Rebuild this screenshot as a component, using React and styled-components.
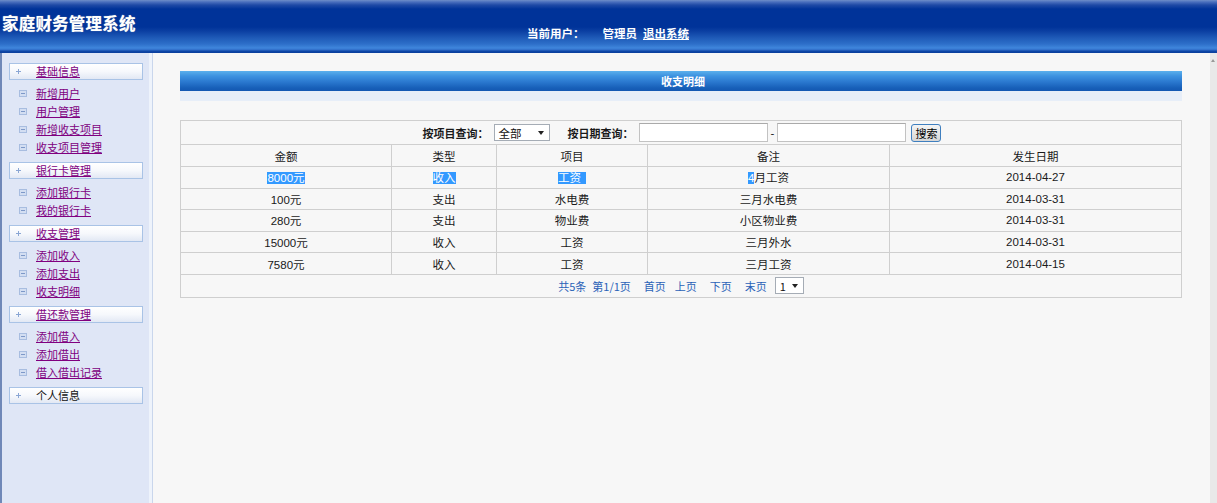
import React from "react";
import styled, { createGlobalStyle } from "styled-components";

const GlobalStyle = createGlobalStyle`
  html, body { margin: 0; padding: 0; background: #f7f7f7; }
  body { font-family: "Liberation Sans", "Noto Sans CJK SC", sans-serif; }
  * { box-sizing: border-box; }
`;

const Page = styled.div`
  width: 1217px;
  height: 503px;
  display: flex;
  flex-direction: column;
  overflow: hidden;
`;

const Header = styled.header`
  height: 53px;
  flex: none;
  position: relative;
  display: flex;
  align-items: flex-start;
  background: linear-gradient(
    to bottom,
    #6f8ec8 0px,
    #4a6fbd 2px,
    #1f4aa6 5px,
    #003399 9px,
    #003399 27px,
    #0b3fa2 31px,
    #1f5bb8 38px,
    #2d6fc9 44px,
    #3f86dc 48px,
    #2f6cc8 50px,
    #0f48a8 51px,
    #0a3e9c 53px
  );
`;

const Brand = styled.h1`
  margin: 0;
  padding: 11px 0 0 2px;
  font-size: 16.5px;
  font-weight: bold;
  color: #fff;
  letter-spacing: 0.2px;
  font-family: "Noto Sans CJK SC", sans-serif;
  text-shadow: 0 0 1px #9ab;
`;

const UserInfo = styled.div`
  position: absolute;
  left: 527px;
  top: 25px;
  display: flex;
  gap: 6px;
  font-size: 11.5px;
  color: #fff;
  font-weight: bold;
  font-family: "Noto Sans CJK SC", sans-serif;
`;

const UserLabel = styled.span`
  margin-right: 12px;
`;

const Logout = styled.a`
  color: #fff;
  text-decoration: underline;
`;

const Body = styled.div`
  flex: 1;
  display: flex;
  min-height: 0;
`;

const Sidebar = styled.aside`
  width: 153px;
  flex: none;
  background: #dfe6f6;
  border-left: 2px solid #7088b8;
  border-right: 1px solid #c9d6ec;
  box-shadow: inset -3px 0 0 #eef3fb;
  padding-top: 10px;
  font-family: "Noto Sans CJK SC", sans-serif;
  font-size: 11px;
`;

const SectionHead = styled.div`
  margin: ${(p) => (p.$first ? "0" : "4px")} 0 0 7px;
  width: 134px;
  height: 17px;
  border: 1px solid #a9c3e6;
  background: linear-gradient(to bottom, #ffffff 0%, #f6f8fc 50%, #e2e8f4 100%);
  display: flex;
  align-items: center;
  padding-left: 6px;
`;

const Plus = styled.span`
  width: 5px;
  height: 5px;
  position: relative;
  margin-right: 15px;
  &::before, &::after {
    content: "";
    position: absolute;
    background: #8aa6d4;
  }
  &::before { left: 2px; top: 0; width: 1px; height: 5px; }
  &::after { left: 0; top: 2px; width: 5px; height: 1px; }
`;

const HeadLink = styled.a`
  color: ${(p) => (p.$plain ? "#111" : "#800080")};
  text-decoration: ${(p) => (p.$plain ? "none" : "underline")};
  line-height: 15px;
`;

const ItemList = styled.ul`
  list-style: none;
  margin: 0;
  padding: 4px 0 2px 0;
`;

const Item = styled.li`
  height: 18px;
  display: flex;
  align-items: center;
  padding-left: 17px;
`;

const ItemIcon = styled.span`
  width: 8px;
  height: 7px;
  border: 1px solid #a8bde0;
  background: #d3def2;
  margin-right: 9px;
  position: relative;
  &::after {
    content: "";
    position: absolute;
    left: 1px;
    top: 2px;
    width: 4px;
    height: 1px;
    background: #7d98c8;
  }
`;

const ItemLink = styled.a`
  color: #800080;
  text-decoration: underline;
`;

const Main = styled.main`
  flex: 1;
  padding: 18px 28px 0 27px;
  background: #f7f7f7;
`;

const TitleBar = styled.div`
  height: 20px;
  background: linear-gradient(
    to bottom,
    #5bb0ec 0%,
    #3d92e0 25%,
    #2a78cf 55%,
    #175fb8 85%,
    #1458b2 100%
  );
  color: #fff;
  font-weight: bold;
  font-size: 11px;
  font-family: "Noto Sans CJK SC", sans-serif;
  display: flex;
  align-items: center;
  justify-content: center;
  padding-left: 4px;
`;

const TitleShade = styled.div`
  height: 10px;
  background: #e7eef8;
  margin-bottom: 19px;
`;

const Grid = styled.table`
  width: 100%;
  border-collapse: collapse;
  border: 1px solid #c4c4c4;
  font-size: 11.5px;
  color: #1a1a1a;
  font-family: "Liberation Sans", "Noto Sans CJK SC", sans-serif;
`;

const Row = styled.tr`
  height: ${(p) => p.$h || 21.6}px;
`;

const Cell = styled.td`
  border: 1px solid #cfcfcf;
  text-align: center;
  padding: 0;
  width: ${(p) => p.$w || "auto"};
`;

const ToolRow = styled.div`
  display: flex;
  align-items: center;
  justify-content: center;
  gap: 5px;
  padding-left: 2px;
`;

const Label = styled.b`
  font-family: "Noto Sans CJK SC", sans-serif;
  font-size: 11px;
`;

const FakeSelect = styled.div`
  width: ${(p) => p.$w}px;
  height: 17px;
  border: 1px solid #a5acb5;
  background: #fff;
  display: flex;
  align-items: center;
  justify-content: space-between;
  padding: 0 5px 0 4px;
  margin-right: ${(p) => p.$mr || 0}px;
  color: #111;
  &::after {
    content: "";
    border-left: 3.5px solid transparent;
    border-right: 3.5px solid transparent;
    border-top: 4px solid #222;
  }
`;

const DateInput = styled.div`
  width: 129px;
  height: 19px;
  border: 1px solid #c2c2c2;
  border-top-color: #aaa;
  background: #fff;
`;

const Dash = styled.span`
  margin: 0 -2px;
`;

const SearchButton = styled.button`
  height: 18px;
  padding: 0 3px;
  font-size: 11px;
  font-family: "Noto Sans CJK SC", sans-serif;
  border: 1px solid #3f7fbf;
  border-radius: 3px;
  background: linear-gradient(to bottom, #f4f4f4, #d6d6d6);
  color: #000;
  line-height: 14px;
`;

const Picked = styled.span`
  background: #3399ff;
  color: #fff;
  padding-right: ${(p) => p.$pad || 0}px;
`;

const Pager = styled.div`
  display: flex;
  align-items: center;
  justify-content: center;
  color: #2a62b8;
  font-family: "Noto Sans CJK SC", sans-serif;
  font-size: 11px;
`;

const PageLink = styled.span`
  margin-right: ${(p) => p.$mr}px;
`;

const Scroll = styled.div`
  width: 7px;
  flex: none;
  background: #e9e9e9;
  position: relative;
  &::before {
    content: "";
    position: absolute;
    left: 1px;
    top: 6px;
    border-left: 2.5px solid transparent;
    border-right: 2.5px solid transparent;
    border-bottom: 3px solid #999;
  }
`;

const sections = [
  { title: "基础信息", items: ["新增用户", "用户管理", "新增收支项目", "收支项目管理"] },
  { title: "银行卡管理", items: ["添加银行卡", "我的银行卡"] },
  { title: "收支管理", items: ["添加收入", "添加支出", "收支明细"] },
  { title: "借还款管理", items: ["添加借入", "添加借出", "借入借出记录"] },
  { title: "个人信息", items: [], plain: true },
];

const records = [
  { amount: "100元", type: "支出", item: "水电费", note: "三月水电费", date: "2014-03-31" },
  { amount: "280元", type: "支出", item: "物业费", note: "小区物业费", date: "2014-03-31" },
  { amount: "15000元", type: "收入", item: "工资", note: "三月外水", date: "2014-03-31" },
  { amount: "7580元", type: "收入", item: "工资", note: "三月工资", date: "2014-04-15" },
];

export default function App() {
  return (
    <Page>
      <GlobalStyle />
      <Header>
        <Brand>家庭财务管理系统</Brand>
        <UserInfo>
          <UserLabel>当前用户：</UserLabel>
          <span>管理员</span>
          <Logout href="#">退出系统</Logout>
        </UserInfo>
      </Header>
      <Body>
        <Sidebar>
          {sections.map((s, i) => (
            <div key={s.title}>
              <SectionHead $first={i === 0}>
                <Plus />
                <HeadLink href="#" $plain={s.plain}>{s.title}</HeadLink>
              </SectionHead>
              {s.items.length > 0 && (
                <ItemList>
                  {s.items.map((it) => (
                    <Item key={it}>
                      <ItemIcon />
                      <ItemLink href="#">{it}</ItemLink>
                    </Item>
                  ))}
                </ItemList>
              )}
            </div>
          ))}
        </Sidebar>
        <Main>
          <TitleBar>收支明细</TitleBar>
          <TitleShade />
          <Grid>
            <tbody>
              <Row $h={24}>
                <Cell colSpan={5}>
                  <ToolRow>
                    <Label>按项目查询：</Label>
                    <FakeSelect $w={56} $mr={13}>全部</FakeSelect>
                    <Label>按日期查询：</Label>
                    <DateInput />
                    <Dash>-</Dash>
                    <DateInput />
                    <SearchButton>搜索</SearchButton>
                  </ToolRow>
                </Cell>
              </Row>
              <Row $h={22}>
                <Cell $w="211px">金额</Cell>
                <Cell $w="105px">类型</Cell>
                <Cell $w="151px">项目</Cell>
                <Cell $w="242px">备注</Cell>
                <Cell>发生日期</Cell>
              </Row>
              <Row>
                <Cell><Picked>8000元</Picked></Cell>
                <Cell><Picked>收入</Picked></Cell>
                <Cell><Picked $pad={5}>工资</Picked></Cell>
                <Cell><Picked>4</Picked>月工资</Cell>
                <Cell>2014-04-27</Cell>
              </Row>
              {records.map((r, i) => (
                <Row key={i}>
                  <Cell>{r.amount}</Cell>
                  <Cell>{r.type}</Cell>
                  <Cell>{r.item}</Cell>
                  <Cell>{r.note}</Cell>
                  <Cell>{r.date}</Cell>
                </Row>
              ))}
              <Row $h={23}>
                <Cell colSpan={5}>
                  <Pager>
                    <PageLink $mr={6}>共5条</PageLink>
                    <PageLink $mr={13}>第1/1页</PageLink>
                    <PageLink $mr={9}>首页</PageLink>
                    <PageLink $mr={13}>上页</PageLink>
                    <PageLink $mr={13}>下页</PageLink>
                    <PageLink $mr={8}>末页</PageLink>
                    <FakeSelect $w={29}>1</FakeSelect>
                  </Pager>
                </Cell>
              </Row>
            </tbody>
          </Grid>
        </Main>
        <Scroll />
      </Body>
    </Page>
  );
}
